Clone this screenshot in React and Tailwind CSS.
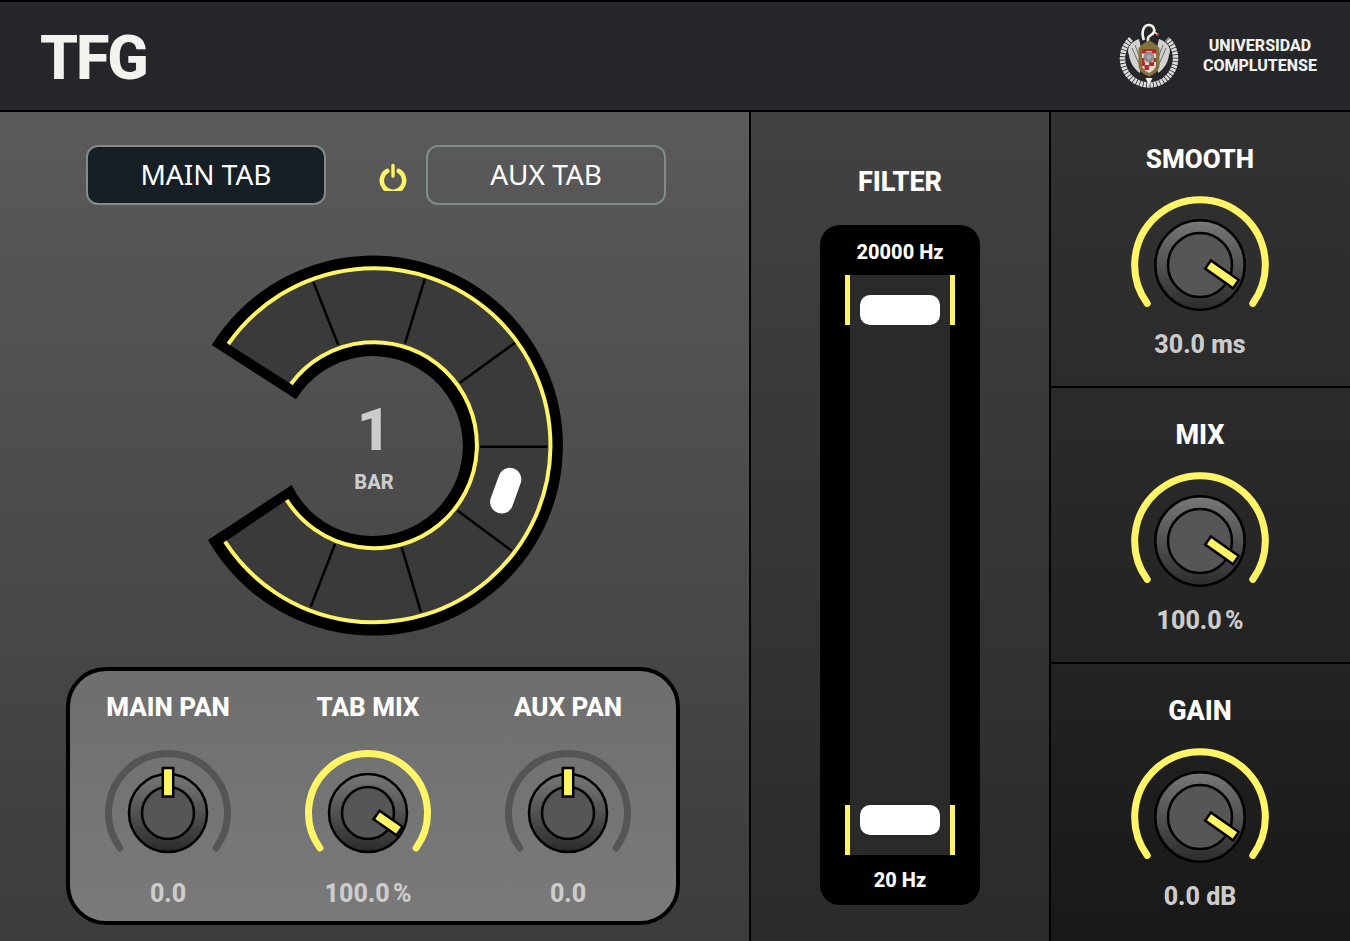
// App.jsx
const YELLOW = '#fff566';

// punto sobre un arco, 0 grados arriba
const polar = (r, deg) => {
  const a = (deg * Math.PI) / 180;
  return [r * Math.sin(a), -r * Math.cos(a)];
};

const arcPath = (r) => {
  const [x1, y1] = polar(r, -126);
  const [x2, y2] = polar(r, 126);
  return `M ${x1} ${y1} A ${r} ${r} 0 1 1 ${x2} ${y2}`;
};

const Knob = ({ on, big, h }) => {
  const arcR = big ? 65.3 : 59.5;
  const ringR = big ? 44.7 : 39;
  const innerR = big ? 32 : 26;
  const px = big ? 22 : 20;
  const py = big ? 9.3 : 10;
  const len = big ? 34 : 28;
  const w = big ? 10 : 10.5;
  return (
    <svg width="140" height={h} viewBox={`-70 -70 140 ${h}`} className="block">
      <defs>
        <linearGradient id="knobRing" x1="0" y1="0" x2="0" y2="1">
          <stop offset="0" stopColor="#787878" />
          <stop offset="1" stopColor="#2b2b2b" />
        </linearGradient>
      </defs>
      <path d={arcPath(arcR)} fill="none" stroke={on ? YELLOW : '#555555'} strokeWidth="7" strokeLinecap="round" />
      <circle r={ringR} fill="url(#knobRing)" stroke="#000" strokeWidth="2.5" />
      <circle r={innerR} fill="#565656" stroke="#000" strokeWidth="2.5" />
      {on ? (
        <rect x={-w / 2} y={-len / 2} width={w} height={len} fill={YELLOW} stroke="#000" strokeWidth="2.5" transform={`translate(${px} ${py}) rotate(125)`} />
      ) : (
        <rect x="-5.2" y="-45" width="10.4" height="28.5" fill={YELLOW} stroke="#000" strokeWidth="2.5" />
      )}
    </svg>
  );
};

const PanKnob = ({ title, value, on }) => (
  <div className="w-[196px] flex flex-col items-center pt-5">
    <div className="h-8 leading-8 text-[26px] font-extrabold text-white">{title}</div>
    <div className="mt-5">
      <Knob on={on} h={130} />
    </div>
    <div className="mt-[6px] h-[30px] leading-[30px] text-[25px] font-extrabold text-[#cccccc] [word-spacing:-3px]">{value}</div>
  </div>
);

const SideKnob = ({ title, value, className, titleSize }) => (
  <div className={`flex flex-col items-center pt-[31px] pr-px ${className}`}>
    <div className={`h-8 leading-8 font-extrabold text-white ${titleSize}`}>{title}</div>
    <div className="mt-5">
      <Knob on big h={124} />
    </div>
    <div className={`mt-[11px] h-[30px] leading-[30px] text-[25px] font-extrabold text-[#cccccc] ${value.includes('%') ? '[word-spacing:-3px]' : ''}`}>{value}</div>
  </div>
);

const spokes = [
  [313.3, 281.7, 338.3, 345],
  [425, 278.3, 405, 343.3],
  [515, 342.7, 460, 382.7],
  [547.3, 446.7, 480, 446.7],
  [511.7, 550.7, 457.7, 510.7],
  [421, 612.3, 401.7, 547.3],
  [310.7, 606.7, 335, 544],
];

const Wheel = () => (
  <div className="relative mt-[45px] ml-[180px] w-[390px] h-[390px]">
    <svg width="390" height="390" viewBox="180 250 390 390" className="block">
      <path d="M 211.7 345 A 190 190 0 1 1 208 540 L 291.7 485 A 90 90 0 1 0 296 399.3 Z" fill="#000" />
      <path d="M 228.3 344 A 177 177 0 1 1 225 541.7 L 286.7 500 A 103 103 0 1 0 291 384 Z" fill="#3a3a3a" />
      {spokes.map((s, i) => (
        <line key={i} x1={s[0]} y1={s[1]} x2={s[2]} y2={s[3]} stroke="#000" strokeWidth="2.5" />
      ))}
      <path d="M 228.3 344 A 177 177 0 1 1 225 541.7" fill="none" stroke={YELLOW} strokeWidth="4" />
      <path d="M 286.7 500 A 103 103 0 1 0 291 384" fill="none" stroke={YELLOW} strokeWidth="4" />
      <line x1="509.8" y1="479.4" x2="501.6" y2="502" stroke="#fff" strokeWidth="23" strokeLinecap="round" />
    </svg>
    <div className="absolute left-[164px] top-[150px] w-[60px] text-center text-[60px] leading-[60px] font-extrabold text-[#cccccc]">1</div>
    <div className="absolute left-[164px] top-[219px] w-[60px] text-center text-[20px] leading-[26px] font-extrabold text-[#cccccc]">BAR</div>
  </div>
);

const PowerIcon = () => (
  <svg width="28" height="28" viewBox="0 0 28 28" fill="none" stroke={YELLOW} strokeWidth="4.6" strokeLinecap="round" className="block">
    <path d="M 8.2 8 A 11.2 11.2 0 1 0 19.8 8" />
    <path d="M 14 2.5 L 14 13" strokeWidth="3.4" />
  </svg>
);

const Crest = () => (
  <svg width="60" height="68" viewBox="0 0 60 68" className="block">
    {/* anillo */}
    <path d="M 12 17 A 26.5 26.5 0 1 0 48 17" fill="none" stroke="#dcdcd9" strokeWidth="5.5" strokeDasharray="2.6 0.8" />
    {/* alas */}
    <path d="M 20 17 C 11 20 7 27 10 33 C 11 41 16 48 21 51 L 23 30 Z" fill="#d2d2d0" />
    <path d="M 40 17 C 49 20 53 27 50 33 C 49 41 44 48 39 51 L 37 30 Z" fill="#d2d2d0" />
    <path d="M 13 26 L 20 42 M 16 23 L 21 36 M 47 26 L 40 42 M 44 23 L 39 36" stroke="#6d6d6d" strokeWidth="1" />
    {/* cuello */}
    <path d="M 25 18 C 22 11 24 3 30 3 C 34 3 36 7 35 10 C 34 13 30 13 29 16 L 29 20" fill="none" stroke="#f4f4f0" strokeWidth="2.6" />
    <rect x="37" y="11" width="3" height="3" fill="#c02a2a" />
    <path d="M 34 9 L 38 12" stroke="#f4f4f0" strokeWidth="1.5" />
    {/* escudo */}
    <path d="M 19.5 26 L 24 22 L 30 18 L 36 22 L 40.5 26 L 40.5 43 C 40.5 49 35 52 30 55 C 25 52 19.5 49 19.5 43 Z" fill="#85723a" />
    <path d="M 23 27 H 37 V 43 C 37 47 33 49 30 51 C 27 49 23 47 23 43 Z" fill="#e3d9d3" />
    <path d="M 23 27 H 27.5 V 31.5 H 23 Z M 32.5 27 H 37 V 31.5 H 32.5 Z M 27.5 27 H 32.5 V 29 H 27.5 Z M 23 36 H 25.5 V 40 H 23 Z M 34.5 36 H 37 V 40 H 34.5 Z M 25.5 43 H 30 V 48 H 25.5 Z M 30 40 H 35 V 44 H 30 Z M 23 40 H 26 V 44 H 23 Z" fill="#b92b2b" />
    <circle cx="30" cy="35" r="5.4" fill="#8d8d8d" />
    <circle cx="30" cy="35" r="2.4" fill="#a9a9a9" />
    {/* punta */}
    <path d="M 26.5 56 H 33.5 L 30 63 Z" fill="#f4f4f0" />
  </svg>
);

const FilterSlider = () => (
  <div className="mt-[28px] w-[160px] h-[680px] rounded-[20px] bg-black flex flex-col items-center">
    <div className="h-[50px] leading-[54px] text-[20px] font-extrabold text-white">20000 Hz</div>
    <div className="relative w-[100px] h-[580px] bg-[#2a2a2a]">
      <div className="absolute -left-[5px] top-0 w-[5px] h-[50px] bg-[#fff566]" />
      <div className="absolute -right-[5px] top-0 w-[5px] h-[50px] bg-[#fff566]" />
      <div className="absolute -left-[5px] bottom-0 w-[5px] h-[50px] bg-[#fff566]" />
      <div className="absolute -right-[5px] bottom-0 w-[5px] h-[50px] bg-[#fff566]" />
      <div className="absolute left-[10px] top-[20px] w-[80px] h-[30px] rounded-[10px] bg-white" />
      <div className="absolute left-[10px] bottom-[20px] w-[80px] h-[30px] rounded-[10px] bg-white" />
    </div>
    <div className="h-[50px] leading-[50px] text-[20px] font-extrabold text-white">20 Hz</div>
  </div>
);

export default function App() {
  return (
    <div className="w-[1350px] h-[941px] overflow-hidden bg-black font-['Roboto',sans-serif]">
      {/* Cabecera */}
      <div className="h-[112px] border-t-2 border-b-2 border-black bg-[#24262a] flex items-center justify-between pl-[40px] pr-[33px]">
        <div className="pt-[4px] text-[61px] leading-none font-extrabold tracking-[-2.2px] text-[#f2f2ee]">TFG</div>
        <div className="flex items-center gap-[24px]">
          <Crest />
          <div className="text-center text-[16px] leading-[20px] font-extrabold text-[#f0f0ec]">
            <div>UNIVERSIDAD</div>
            <div>COMPLUTENSE</div>
          </div>
        </div>
      </div>

      <div className="flex h-[829px]">
        {/* Panel principal */}
        <div className="w-[749px] shrink-0 bg-gradient-to-b from-[#5a5a5a] to-[#3c3c3c] pt-[33px]">
          <div className="flex pl-[86px] font-['Noto_Sans',sans-serif] text-[28px] text-white">
            <div className="w-[240px] h-[60px] pb-[2px] rounded-xl border-2 border-[#7f8c8c] bg-[#161f25] flex items-center justify-center">MAIN TAB</div>
            <div className="w-[100px] flex items-center justify-end pr-[19px] pt-[4px]">
              <PowerIcon />
            </div>
            <div className="w-[240px] h-[60px] pb-[2px] rounded-xl border-2 border-[#7f8c8c] flex items-center justify-center">AUX TAB</div>
          </div>

          <Wheel />

          <div className="mt-[27px] ml-[66px] w-[614px] h-[258px] rounded-[40px] border-4 border-black bg-gradient-to-b from-[#6e6e6e] to-[#7a7a7a] flex gap-1">
            <PanKnob title="MAIN PAN" value="0.0" />
            <PanKnob title="TAB MIX" value="100.0 %" on />
            <PanKnob title="AUX PAN" value="0.0" />
          </div>
        </div>

        {/* Filtro */}
        <div className="w-[298px] shrink-0 ml-[2px] bg-gradient-to-b from-[#424242] to-[#2a2a2a] flex flex-col items-center pt-[54px]">
          <div className="h-8 leading-8 text-[27px] font-extrabold text-white">FILTER</div>
          <div className="-mt-px">
            <FilterSlider />
          </div>
        </div>

        {/* Controles */}
        <div className="flex-1 ml-[2px] flex flex-col gap-[2px]">
          <SideKnob title="SMOOTH" titleSize="text-[26px]" value="30.0 ms" className="h-[274px] bg-gradient-to-b from-[#323232] to-[#2b2b2b]" />
          <SideKnob title="MIX" titleSize="text-[27px]" value="100.0 %" className="h-[274px] bg-gradient-to-b from-[#2b2b2b] to-[#232323]" />
          <SideKnob title="GAIN" titleSize="text-[27px]" value="0.0 dB" className="flex-1 bg-gradient-to-b from-[#232323] to-[#181818]" />
        </div>
      </div>
    </div>
  );
}
